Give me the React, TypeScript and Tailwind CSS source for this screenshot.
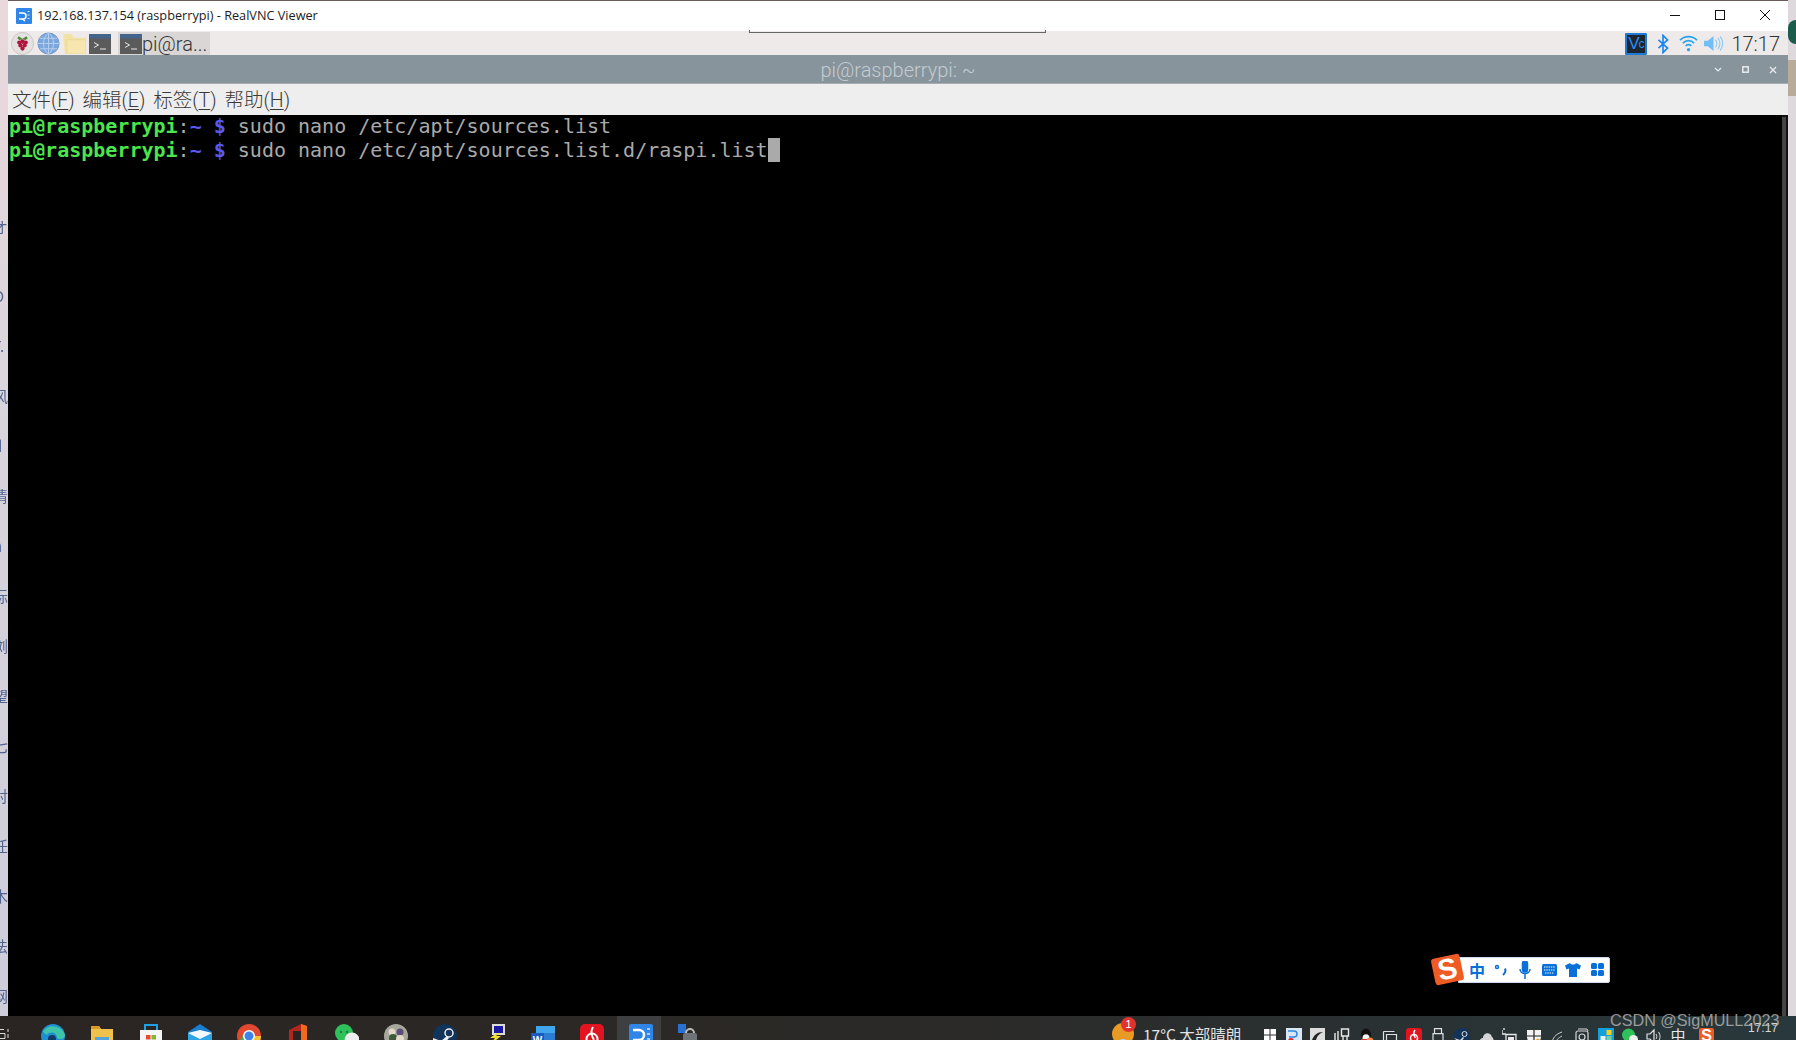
import type { ReactNode } from "react";

const MONO = "font-['DejaVu_Sans_Mono',monospace]";

const RaspberryIcon = () => (
  <svg viewBox="0 0 24 24" className="h-[23px] w-[23px]">
    <circle cx="12" cy="12" r="11.5" fill="#e4e2e0" stroke="#c8c6c4" />
    <path d="M12 7 8 4.500 6.500 6.500l2.500 2zM12 7l4-2.500 1.500 2-2.500 2z" fill="#4f8a3a" />
    <g fill="#b0153f">
      <circle cx="12" cy="10" r="2.400" />
      <circle cx="8.500" cy="11" r="2.100" />
      <circle cx="15.500" cy="11" r="2.100" />
      <circle cx="9.800" cy="14" r="2.200" />
      <circle cx="14.200" cy="14" r="2.200" />
      <circle cx="12" cy="17.300" r="2.200" />
    </g>
  </svg>
);

const GlobeIcon = () => (
  <svg viewBox="0 0 24 24" className="h-[23px] w-[23px]">
    <circle cx="12" cy="12" r="11" fill="#7ba7dc" stroke="#6d97ca" />
    <path d="M1 12h22M12 1v22M3 6.500h18M3 17.500h18M12 1c-7 5-7 17 0 22M12 1c7 5 7 17 0 22" stroke="#b9d0ee" strokeWidth="1" fill="none" />
  </svg>
);

const FolderIcon = () => (
  <svg viewBox="0 0 24 22" className="h-[21px] w-[23px]">
    <path d="M0 1h9l2 4h13v17H2z" fill="#f3e2a6" />
    <path d="M4 7h20v15H4z" fill="#f7e6ad" stroke="#e6d48f" strokeWidth="0.600" />
  </svg>
);

const TerminalIcon = () => (
  <svg viewBox="0 0 22 20" className="h-[20px] w-[22px]">
    <rect width="22" height="20" fill="#5b5b5b" />
    <rect width="22" height="4.500" fill="#44648c" />
    <path d="M5 8.500 9.500 11 5 13.500M11 15h6" stroke="#e8e8e8" strokeWidth="1" fill="none" />
  </svg>
);

const PanelTray = () => (
  <div className="flex items-center">
    <div className="flex h-[22px] w-[22px] items-center justify-center rounded-[1px] border-2 border-[#1f7ad6] bg-[#1c2530] leading-none text-[#2d8bea] font-['Liberation_Sans',sans-serif]">
      <span className="text-[17px]">V</span>
      <span className="-ml-[1px] text-[12px]">c</span>
    </div>
    <svg viewBox="0 0 12 22" className="ml-[10px] h-[20px] w-[12px]" fill="none" stroke="#1a86f0" strokeWidth="1.800">
      <path d="M1 6.500 11 15.500 6 20.500V1.500l5 5L1 15.500" />
    </svg>
    <svg viewBox="0 0 20 18" className="ml-[10px] h-[17px] w-[19px]" fill="none" stroke="#26a2f2" strokeWidth="1.800">
      <path d="M1 5.500c5-5 13-5 18 0M4 8.500c3.500-3.300 8.500-3.300 12 0M7 11.500c1.800-1.500 4.200-1.500 6 0" />
      <circle cx="10" cy="15.500" r="1.700" fill="#26a2f2" stroke="none" />
    </svg>
    <svg viewBox="0 0 20 18" className="ml-[6px] h-[17px] w-[19px]" fill="none">
      <path d="M0 6h4l6-5v16l-6-5H0z" fill="#72bdf6" />
      <path d="M12 5c2 2.500 2 5.500 0 8M14.500 3c3 3.500 3 8.500 0 12M17 1.500c3.500 4.500 3.500 10.500 0 15" stroke="#8dcbf8" strokeWidth="1.200" />
    </svg>
  </div>
);

const TitleBar = () => (
  <div className="flex h-[30px] items-center bg-white">
    <svg viewBox="0 0 16 16" className="ml-[8px] h-[16px] w-[16px]">
      <rect width="16" height="16" rx="1" fill="#2f86e6" />
      <path d="M3 5h4a3 3 0 0 1 0 6H3M6.500 11 9 13" stroke="#fff" strokeWidth="1.500" fill="none" />
      <path d="M11.500 3.500h2M11.500 7h2M11.500 10.500h2" stroke="#cfe3fa" strokeWidth="1" />
    </svg>
    <span className="ml-[5px] text-[12.7px] text-[#1c1c1c] font-['Open_Sans',sans-serif]">
      192.168.137.154 (raspberrypi) - RealVNC Viewer
    </span>
    <div className="mb-[2px] ml-auto flex items-center">
      <svg viewBox="0 0 12 12" className="h-[12px] w-[12px]" stroke="#111" strokeWidth="1">
        <path d="M1 6.500h10" />
      </svg>
      <svg viewBox="0 0 12 12" className="ml-[33px] h-[12px] w-[12px]" stroke="#111" strokeWidth="1" fill="none">
        <rect x="1.500" y="1.500" width="9" height="9" />
      </svg>
      <svg viewBox="0 0 12 12" className="mr-[17px] ml-[33px] h-[12px] w-[12px]" stroke="#111" strokeWidth="1">
        <path d="m1 1 10 10M11 1 1 11" />
      </svg>
    </div>
  </div>
);

const PiPanel = () => (
  <div className="relative flex h-[24px] items-center bg-[#eeeaea] pt-px">
    <div className="ml-[3px] flex items-center gap-[3px]">
      <RaspberryIcon />
      <GlobeIcon />
      <FolderIcon />
      <TerminalIcon />
    </div>
    <div className="ml-[7px] flex h-[23px] w-[92px] items-center bg-[#d9d6d5] pl-[2px]">
      <TerminalIcon />
      <span className="text-[20px] leading-none text-[#333] font-['Roboto',sans-serif] font-light">pi@ra...</span>
    </div>
    {/* bit of the VNC toolbar handle hanging over the panel */}
    <div className="absolute top-[-1px] left-[741px] h-[3px] w-[297px] border-x border-b border-[#666]" />
    <div className="ml-auto flex items-center pr-[8px]">
      <PanelTray />
      <span className="ml-[8px] text-[20px] leading-none text-[#333] font-['Roboto',sans-serif] font-light">17:17</span>
    </div>
  </div>
);

const TerminalHeader = () => (
  <div className="flex h-[29px] items-center border-b border-[#a6aeb3] bg-[#87949c] pt-px">
    <div className="w-[90px]" />
    <div className="flex-1 text-center text-[20px] leading-none text-[#c3ccd1] font-['Roboto',sans-serif] font-light">
      pi@raspberrypi: ~
    </div>
    <div className="flex w-[90px] items-center justify-end gap-[20px] pr-[11px]">
      <svg viewBox="0 0 8 6" className="h-[6px] w-[8px]" stroke="#e6ebee" strokeWidth="1.200" fill="none">
        <path d="m1 1 3 3 3-3" />
      </svg>
      <svg viewBox="0 0 7 7" className="h-[7px] w-[7px]" stroke="#e6ebee" strokeWidth="1.500" fill="none">
        <rect x="0.800" y="0.800" width="5.400" height="5.400" />
      </svg>
      <svg viewBox="0 0 8 8" className="h-[8px] w-[8px]" stroke="#e6ebee" strokeWidth="1.400">
        <path d="m1 1 6 6M7 1 1 7" />
      </svg>
    </div>
  </div>
);

const menus = [
  { label: "文件", key: "F" },
  { label: "编辑", key: "E" },
  { label: "标签", key: "T" },
  { label: "帮助", key: "H" },
];

const MenuBar = () => (
  <div className="flex h-[31px] items-center gap-[8px] bg-[#eeeeee] pt-[3px] pl-[4px] text-[19.5px] text-[#3a3a3a] font-['Roboto','Noto_Sans_CJK_SC',sans-serif] font-light">
    {menus.map((m) => (
      <span key={m.label}>
        {m.label}(<span className="underline underline-offset-2">{m.key}</span>)
      </span>
    ))}
  </div>
);

const Prompt = () => (
  <>
    <span className="font-bold text-[#4ee44e]">pi@raspberrypi</span>
    <span className="text-[#a8a8a8]">:</span>
    <span className="font-bold text-[#5a5af0]">~ $</span>
    <span> </span>
  </>
);

const Terminal = () => (
  <div className="flex min-h-0 flex-1 bg-black">
    <div className={`${MONO} -mt-px flex-1 pl-px text-[20px] leading-[24px] whitespace-pre text-[#aaaaaa]`}>
      <div>
        <Prompt />
        sudo nano /etc/apt/sources.list
      </div>
      <div className="flex">
        <span>
          <Prompt />
          sudo nano /etc/apt/sources.list.d/raspi.list
        </span>
        <span className="h-[24px] w-[12px] bg-[#aaaaaa]" />
      </div>
    </div>
    <div className="flex w-[6px] flex-col bg-[#111] pt-[2px]">
      <div className="h-[900px] w-[4px] bg-[#444]" />
    </div>
  </div>
);

const ImeCell = ({ children }: { children: ReactNode }) => (
  <div className="flex w-[24px] items-center justify-center">{children}</div>
);

const ImeBar = () => (
  <div className="absolute top-[956px] left-[1433px] flex items-center">
    <div className="z-10 flex h-[27px] w-[29px] -rotate-12 items-center justify-center rounded-[3px] bg-[#ee5b24] text-[29px] leading-none font-bold text-white font-['Liberation_Sans',sans-serif]">
      S
    </div>
    <div className="-ml-[4px] flex h-[26px] w-[152px] items-center rounded-r-[2px] border border-[#c9d8ee] bg-white pl-[6px] font-['Noto_Sans_CJK_SC',sans-serif]">
      <ImeCell>
        <span className="text-[16px] leading-none font-bold text-[#0a6fd6]">中</span>
      </ImeCell>
      <ImeCell>
        <svg viewBox="0 0 14 12" className="h-[12px] w-[14px]" fill="none" stroke="#0a6fd6" strokeWidth="1.500">
          <circle cx="3" cy="3" r="1.500" />
          <path d="M11 4.500c1 2 .5 4-2 6.500" strokeWidth="2" />
        </svg>
      </ImeCell>
      <ImeCell>
        <svg viewBox="0 0 12 18" className="h-[18px] w-[12px]" fill="none" stroke="#0a6fd6" strokeWidth="1.500">
          <rect x="3.500" y="0" width="5" height="11" rx="2.500" fill="#0a6fd6" />
          <path d="M1 8c0 6 10 6 10 0M6 13v5" />
        </svg>
      </ImeCell>
      <ImeCell>
        <svg viewBox="0 0 15 12" className="h-[12px] w-[15px]">
          <rect width="15" height="12" rx="1.500" fill="#0a6fd6" />
          <path d="M2 3h11M2 6h11M3 9h9" stroke="#fff" strokeWidth="1.200" strokeDasharray="1.400 0.900" />
        </svg>
      </ImeCell>
      <ImeCell>
        <svg viewBox="0 0 16 14" className="h-[14px] w-[16px]" fill="#0a6fd6">
          <path d="M5 0 0 2.500 1.500 6.500 4 5.500V14h8V5.500l2.500 1L16 2.500 11 0c-.5 2-5.500 2-6 0z" />
        </svg>
      </ImeCell>
      <ImeCell>
        <svg viewBox="0 0 13 13" className="h-[13px] w-[13px]" fill="#0a6fd6">
          <rect width="6" height="6" rx="1.500" />
          <rect x="7" width="6" height="6" rx="1.500" />
          <rect y="7" width="6" height="6" rx="1.500" />
          <rect x="7" y="7" width="6" height="6" rx="1.500" />
        </svg>
      </ImeCell>
    </div>
  </div>
);

const AppIcon = ({ children }: { children: ReactNode }) => (
  <svg viewBox="0 0 24 24" className="h-[24px] w-[24px] shrink-0">
    {children}
  </svg>
);

const AppIcons = () => (
  <div className="mt-[8px] flex gap-[25px] pl-[41px]">
    <AppIcon>
      <circle cx="12" cy="12" r="12" fill="#1e8fd0" />
      <path d="M2 8C6 0 20 0 24 11c0 4-5 5-8 3 0-6-8-7-10-3z" fill="#3ec5a8" />
      <circle cx="11" cy="15" r="4" fill="#123a66" />
    </AppIcon>
    <AppIcon>
      <path d="M1 2h8l2 3h12v19H1z" fill="#f0c24b" />
      <path d="M1 2h8l2 3H1z" fill="#d99a26" />
      <rect x="5" y="13" width="14" height="11" fill="#55a5dc" />
    </AppIcon>
    <AppIcon>
      <path d="M6 6V1h12v5" stroke="#1fa0e6" strokeWidth="2" fill="none" />
      <rect x="1" y="6" width="22" height="18" fill="#f5f5f5" />
      <rect x="7" y="11" width="4.500" height="4.500" fill="#ea4b2c" />
      <rect x="12.500" y="11" width="4.500" height="4.500" fill="#7db82d" />
      <rect x="7" y="16.500" width="4.500" height="4.500" fill="#1aa0e8" />
      <rect x="12.500" y="16.500" width="4.500" height="4.500" fill="#f4b400" />
    </AppIcon>
    <AppIcon>
      <path d="M12 0 24 8v16H0V8z" fill="#1a7ed0" />
      <path d="M0 10h24v14H0z" fill="#2ea6e6" />
      <path d="M0 9 12 15 24 9l-12-3z" fill="#f2f8fc" />
    </AppIcon>
    <AppIcon>
      <circle cx="12" cy="12" r="12" fill="#e2482f" />
      <path d="M12 24a12 12 0 0 1-10.400-6L7 9l5 9z" fill="#4aa650" />
      <path d="M24 12a12 12 0 0 1-12 12l5-9-5-3z" fill="#f4c32f" />
      <circle cx="12" cy="12" r="6" fill="#fff" />
      <circle cx="12" cy="12" r="4.500" fill="#3f83ea" />
    </AppIcon>
    <AppIcon>
      <path d="M3 6 15 0l6 2v22H3z" fill="#b3261e" />
      <path d="M7 7h8v16H7z" fill="#2a2523" />
      <path d="M15 0l6 2v22h-6z" fill="#ef6a1f" />
    </AppIcon>
    <AppIcon>
      <circle cx="9" cy="9" r="9" fill="#2fc25b" />
      <circle cx="17" cy="16" r="7.500" fill="#eeeeee" />
      <circle cx="6" cy="8" r="1.200" fill="#1c7d3b" />
      <circle cx="12" cy="8" r="1.200" fill="#1c7d3b" />
    </AppIcon>
    <AppIcon>
      <circle cx="12" cy="12" r="12" fill="#a7a79b" />
      <circle cx="8" cy="8" r="3.500" fill="#e3d9c8" />
      <circle cx="16" cy="8" r="3.500" fill="#5b4d78" />
      <circle cx="9" cy="14" r="4" fill="#3e5a3a" />
      <circle cx="16" cy="15" r="4" fill="#e3d9c8" />
    </AppIcon>
    <AppIcon>
      <circle cx="12" cy="12" r="12" fill="#12345a" />
      <circle cx="16" cy="9" r="4" fill="none" stroke="#eee" strokeWidth="1.500" />
      <path d="M0 14 8 17l6-5 2 2-7 8-9-4z" fill="#eee" />
    </AppIcon>
    <AppIcon>
      <rect x="10" y="0" width="13" height="11" fill="#dcdcdc" />
      <rect x="12" y="2" width="9" height="7" fill="#1a1aa0" />
      <path d="M15 9 8 14h5l-5 7 11-9h-5l4-3z" fill="#f2e02e" />
      <rect x="1" y="17" width="9" height="7" fill="#1a1aa0" stroke="#ddd" strokeWidth="0.800" />
    </AppIcon>
    <AppIcon>
      <rect x="5" y="2" width="19" height="22" rx="1" fill="#2b7cd3" />
      <rect x="5" y="2" width="19" height="7" fill="#41a5ee" />
      <rect x="0" y="9" width="13" height="13" fill="#185abd" />
      <text x="6.500" y="19.500" textAnchor="middle" fontSize="10" fontWeight="700" fill="#fff" fontFamily="Liberation Sans">W</text>
    </AppIcon>
    <AppIcon>
      <rect width="24" height="24" rx="5" fill="#e1141f" />
      <circle cx="12" cy="15" r="5.500" fill="none" stroke="#fff" strokeWidth="2" />
      <path d="M13 3c-2 3-2 8 1 13" fill="none" stroke="#fff" strokeWidth="2" />
    </AppIcon>
    <AppIcon>
      <rect width="24" height="24" rx="2" fill="#2f86e6" />
      <path d="M4 6h6a5 5 0 0 1 0 10H4" fill="none" stroke="#fff" strokeWidth="2.500" />
      <path d="M18 5h3M18 10h3M18 15h3" stroke="#cfe3fa" strokeWidth="1.500" />
    </AppIcon>
    <AppIcon>
      <rect x="0" y="0" width="8" height="9" fill="#2a70d0" />
      <path d="M8 9a4 4 0 0 1 8 0" fill="none" stroke="#bbb" strokeWidth="2" />
      <rect x="5" y="9" width="14" height="15" rx="2" fill="#6f7378" />
    </AppIcon>
  </div>
);

const TrayCell = ({ children }: { children: ReactNode }) => (
  <div className="flex w-[24px] shrink-0 justify-center">{children}</div>
);

const TrayIcon = ({ children }: { children: ReactNode }) => (
  <TrayCell>
    <svg viewBox="0 0 16 16" className="h-[16px] w-[16px]">
      {children}
    </svg>
  </TrayCell>
);

const TaskbarTray = () => (
  <div className="mt-[12px] flex">
    <TrayIcon>
      <path d="M2 1h5.500v5.500H2zM8.500 1H14v5.500H8.500zM2 7.500h5.500V13H2zM8.500 7.500H14V13H8.500z" fill="#fff" />
    </TrayIcon>
    <TrayIcon>
      <rect width="16" height="16" fill="#d8e6f6" />
      <path d="M2 3h6a3 3 0 0 1 0 6H3" fill="none" stroke="#2f86e6" strokeWidth="1.500" />
      <circle cx="5" cy="13" r="3" fill="#d92b2b" />
    </TrayIcon>
    <TrayIcon>
      <rect width="15" height="16" fill="#dcdcdc" />
      <path d="M2 12C4 7 7 4 13 4 9 6 7 8 6 12z" fill="#222" />
    </TrayIcon>
    <TrayIcon>
      <path d="M1 5v11M4 3v13M7.500 1h7v7h-7zM9 8v8M13 8v8" fill="none" stroke="#e8e8e8" strokeWidth="1.400" />
    </TrayIcon>
    <TrayIcon>
      <ellipse cx="8" cy="7" rx="5" ry="6.500" fill="#111" />
      <ellipse cx="8" cy="10" rx="3.500" ry="3.800" fill="#f5f5f5" />
      <path d="M3 11h8v3H4z" fill="#d92b2b" />
      <circle cx="12" cy="13" r="3.500" fill="#ee8a4a" />
    </TrayIcon>
    <TrayIcon>
      <path d="M1.500 3.500h11M1.500 3.500V16M4.500 6.500h10V16h-10z" fill="none" stroke="#e0e0e0" strokeWidth="1.200" />
    </TrayIcon>
    <TrayIcon>
      <rect width="16" height="16" rx="3" fill="#e1141f" />
      <circle cx="8" cy="10" r="3.500" fill="none" stroke="#fff" strokeWidth="1.500" />
      <path d="M9 2c-1.500 2-1.500 5 .5 8" fill="none" stroke="#fff" strokeWidth="1.500" />
    </TrayIcon>
    <TrayIcon>
      <path d="M4.500 .7h7v5h-7zM3 5.700h10V16H3z" fill="none" stroke="#e0e0e0" strokeWidth="1.200" />
    </TrayIcon>
    <TrayIcon>
      <circle cx="8" cy="8" r="8" fill="#12345a" />
      <circle cx="10.500" cy="6" r="2.500" fill="none" stroke="#ddd" strokeWidth="1" />
      <path d="M0 10 6 12l3-3 1 1-4 5z" fill="#ddd" />
    </TrayIcon>
    <TrayIcon>
      <path d="M1 16c0-4 2-6 4-6 0-5 7-7 9-1 2 1 2 5 1 7z" fill="#d4d6d8" />
    </TrayIcon>
    <TrayIcon>
      <path d="M0 2v4h4M2 2v-2M4 6.500h10V14H4z" fill="none" stroke="#e8e8e8" strokeWidth="1.300" />
      <rect x="6" y="9" width="6" height="3" fill="#e8e8e8" />
    </TrayIcon>
    <TrayIcon>
      <path d="M1 2h14v7c0 4-3 6-7 7-4-1-7-3-7-7z" fill="#f2f2f2" />
      <path d="M8 2v14M1 8h14" stroke="#222" strokeWidth="1.200" />
      <circle cx="12" cy="13" r="2.200" fill="#e8a020" />
    </TrayIcon>
    <TrayIcon>
      <path d="M2 16C2 10 6 6 12 4M6 16c0-4 2-6 6-8M10 16c0-2 1-3 3-4" fill="none" stroke="#d0d0d0" strokeWidth="1" />
    </TrayIcon>
    <TrayIcon>
      <rect x="2" y="3" width="12" height="12" rx="2" fill="none" stroke="#d8d8d8" strokeWidth="1.200" />
      <circle cx="8" cy="9" r="3" fill="none" stroke="#d8d8d8" strokeWidth="1.200" />
      <path d="M4 1h9l1 2" fill="none" stroke="#d8d8d8" />
    </TrayIcon>
    <TrayIcon>
      <rect width="16" height="16" fill="#14a0d8" />
      <rect x="8.500" y="2" width="5" height="5" fill="#f4d020" />
      <rect x="2.500" y="8" width="5" height="5" fill="#e8f4fa" />
      <rect x="8.500" y="8" width="5" height="5" fill="#7fd0a0" />
    </TrayIcon>
    <TrayIcon>
      <circle cx="6.500" cy="7" r="6.500" fill="#2fc25b" />
      <circle cx="11.500" cy="11.500" r="4.500" fill="#eeeeee" />
    </TrayIcon>
    <TrayIcon>
      <path d="M1 6h3l4-4v13l-4-4H1z" fill="none" stroke="#e0e0e0" strokeWidth="1.200" />
      <path d="M10 6c1 1.500 1 3.500 0 5M12.500 4c2 2.500 2 6.500 0 9" fill="none" stroke="#e0e0e0" />
    </TrayIcon>
    <TrayCell>
      <span className="-mt-[2px] text-[15px] leading-[18px] text-[#e8e8e8] font-['Noto_Sans_CJK_SC',sans-serif]">中</span>
    </TrayCell>
    <div className="ml-[9px] flex h-[16px] w-[15px] justify-center rounded-[2px] bg-[#ee5b24] text-[16px] leading-none font-bold text-white font-['Liberation_Sans',sans-serif]">
      S
    </div>
  </div>
);

const Taskbar = () => (
  <div className="relative flex h-[24px] overflow-hidden bg-gradient-to-r from-[#2a2522] via-[#2b2927] to-[#28383c]">
    <div className="absolute top-0 left-[617px] h-[24px] w-[44px] bg-[#3d3f40]" />
    <svg viewBox="0 0 10 14" className="absolute top-[12px] left-0 h-[14px] w-[10px]" stroke="#ddd" fill="none">
      <path d="M0 1.500h4M0 5.500h5v5H0M8 1v3M8 6v4" />
    </svg>
    <div className="relative">
      <AppIcons />
    </div>
    <div className="relative ml-auto flex pr-[20px]">
      <div className="relative w-[146px]">
        <svg viewBox="0 0 22 22" className="absolute top-[7px] left-0 h-[22px] w-[22px]">
          <circle cx="11" cy="11" r="11" fill="#e99a25" />
          <path d="M5 22c0-8 12-8 12 0z" fill="#bcd2ee" />
        </svg>
        <div className="absolute top-[1px] left-[9px] flex h-[15px] w-[15px] items-center justify-center rounded-full bg-[#e0332e] text-[11px] leading-none text-white font-['Liberation_Sans',sans-serif]">
          1
        </div>
        <span className="absolute top-[8px] left-[31px] text-[15.500px] leading-[20px] whitespace-nowrap text-[#e2e2e2] font-['Noto_Sans_CJK_SC',sans-serif]">
          17°C 大部晴朗
        </span>
      </div>
      <TaskbarTray />
      <span className="mt-[3px] ml-[34px] w-[28px] text-[12px] leading-[18px] text-[#d8d8d8] font-['Liberation_Sans',sans-serif]">
        17:17
      </span>
    </div>
  </div>
);

const sideLetters = ["オ", "O", "F.", "风", "d", "清", "h", "标", "浏", "望", "七", "对", "任", "木", "法", "网"];

const App = () => {
  return (
    <div className="relative flex h-[1040px] w-[1796px] flex-col overflow-hidden bg-black">
      <div className="flex min-h-0 flex-1">
        <div className="flex w-[8px] flex-col overflow-hidden bg-gradient-to-b from-[#ead9dc] via-[#d6d3dc] to-[#cfcdda] pt-[219px]">
          {sideLetters.map((c, i) => (
            <div
              key={i}
              className={`-ml-[7px] h-[50px] shrink-0 text-[15px] leading-none text-[#2f4a7c] opacity-80 blur-[0.4px] font-['Noto_Sans_CJK_SC',sans-serif] ${i === 0 ? "mb-[19px] opacity-40" : ""}`}
            >
              {c}
            </div>
          ))}
        </div>
        <div className="flex min-w-0 flex-1 flex-col border-t border-[#6b5a5a]">
          <TitleBar />
          <PiPanel />
          <TerminalHeader />
          <MenuBar />
          <Terminal />
        </div>
        <div className="flex w-[8px] flex-col bg-[#ded9dc]">
          <div className="mt-[20px] h-[24px] w-[8px] rounded-l-full bg-[#1c5c4c]" />
          <div className="mt-[16px] h-[36px] w-[8px] bg-[#b9ab9a]" />
        </div>
      </div>
      <Taskbar />
      <ImeBar />
      <span className="absolute top-[1010px] left-[1610px] text-[16.200px] leading-5 whitespace-nowrap text-[#b8b8b8]/80 font-['Liberation_Sans',sans-serif]">
        CSDN @SigMULL2023
      </span>
    </div>
  );
};

export default App;
